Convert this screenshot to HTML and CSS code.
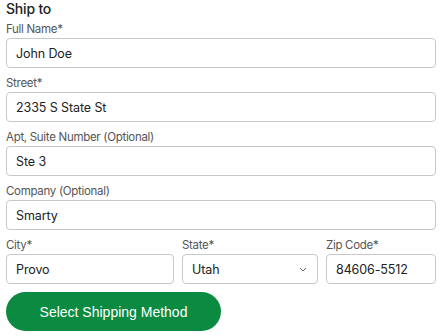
FILE: index.html
```html
<!DOCTYPE html>
<html>
<head>
<meta charset="utf-8">
<link rel="stylesheet" href="styles.css">
</head>
<body>
<form class="ship">
  <h2 class="title">Ship to</h2>
  <div class="field">
    <label class="label">Full Name*</label>
    <div class="input">John Doe</div>
  </div>
  <div class="field">
    <label class="label">Street*</label>
    <div class="input">2335 S State St</div>
  </div>
  <div class="field">
    <label class="label">Apt, Suite Number (Optional)</label>
    <div class="input">Ste 3</div>
  </div>
  <div class="field">
    <label class="label">Company (Optional)</label>
    <div class="input">Smarty</div>
  </div>
  <div class="row">
    <div class="field">
      <label class="label">City*</label>
      <div class="input">Provo</div>
    </div>
    <div class="field">
      <label class="label">State*</label>
      <div class="input select">Utah
        <svg class="chev" width="8" height="5" viewBox="0 0 8 5"><path d="M1 1l3 3 3-3" fill="none" stroke="#666" stroke-width="1"/></svg>
      </div>
    </div>
    <div class="field">
      <label class="label">Zip Code*</label>
      <div class="input">84606-5512</div>
    </div>
  </div>
  <button type="button" class="btn">Select Shipping Method</button>
</form>
</body>
</html>
```
FILE: styles.css
```css
* { box-sizing: border-box; }
html, body { margin: 0; background: #fff; }
body { font-family: Inter, "Noto Sans", sans-serif; }
.ship { padding: 0 12px 0 6px; width: 448px; }
.title { margin: 0; font-size: 14px; font-weight: 500; line-height: 18px; color: #222; letter-spacing: -0.2px; height: 21px; }
.field { display: flex; flex-direction: column; margin-bottom: 7px; }
.label { font-size: 11.5px; line-height: 17px; color: #555; letter-spacing: -0.3px; }
.input { height: 30px; border: 1px solid #c8c8c8; border-radius: 4px; padding: 0 9px; display: flex; align-items: center; font-size: 12.5px; color: #222; letter-spacing: -0.1px; }
.select { justify-content: space-between; padding-right: 10px; }
.row { display: grid; grid-template-columns: 168px 136px 110px; gap: 8px; }
.row .field { margin-bottom: 8px; }
.btn { display: block; width: 215px; height: 39px; border: 0; border-radius: 20px; background: #0b8a42; color: #fff; font-family: "Liberation Sans", Arial, sans-serif; font-size: 14px; padding: 0; }
```
